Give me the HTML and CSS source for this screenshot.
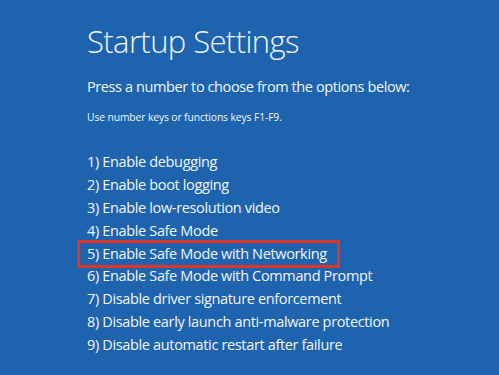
FILE: index.html
```html
<!DOCTYPE html>
<html>
<head>
<meta charset="utf-8">
<link rel="stylesheet" href="styles.css">
</head>
<body>
<main class="screen">
  <h1 class="title">Startup Settings</h1>
  <p class="lead">Press a number to choose from the options below:</p>
  <p class="hint">Use number keys or functions keys F1-F9.</p>
  <ol class="options">
    <li class="opt">1) Enable debugging</li>
    <li class="opt">2) Enable boot logging</li>
    <li class="opt">3) Enable low-resolution video</li>
    <li class="opt">4) Enable Safe Mode</li>
    <li class="opt opt-hl">5) Enable Safe Mode with Networking</li>
    <li class="opt">6) Enable Safe Mode with Command Prompt</li>
    <li class="opt">7) Disable driver signature enforcement</li>
    <li class="opt">8) Disable early launch anti-malware protection</li>
    <li class="opt">9) Disable automatic restart after failure</li>
  </ol>
</main>
</body>
</html>
```
FILE: styles.css
```css
html, body {
  margin: 0;
  padding: 0;
  background: #1e63ad;
}
.screen {
  width: 499px;
  height: 375px;
  box-sizing: border-box;
  padding: 22px 0 0 87px;
  background: #1e63ad;
  color: #f2f6fb;
  font-family: "Open Sans", "Noto Sans", sans-serif;
  overflow: hidden;
}
.title {
  margin: 0;
  font-size: 31px;
  font-weight: 300;
  line-height: 38px;
  letter-spacing: -0.6px;
}
.lead {
  margin: 17px 0 0;
  font-size: 14.5px;
  line-height: 20px;
  letter-spacing: -0.4px;
}
.hint {
  margin: 13px 0 0;
  font-size: 10.3px;
  line-height: 14px;
  letter-spacing: -0.1px;
}
.options {
  list-style: none;
  margin: 27px 0 0;
  padding: 0;
}
.opt {
  font-size: 14.5px;
  line-height: 22.9px;
  height: 22.9px;
  letter-spacing: -0.35px;
  position: relative;
}
.opt-hl::before {
  content: "";
  position: absolute;
  left: -10px;
  top: -3px;
  width: 263px;
  height: 28px;
  border: 3px solid #e0332c;
  box-sizing: border-box;
}
```
